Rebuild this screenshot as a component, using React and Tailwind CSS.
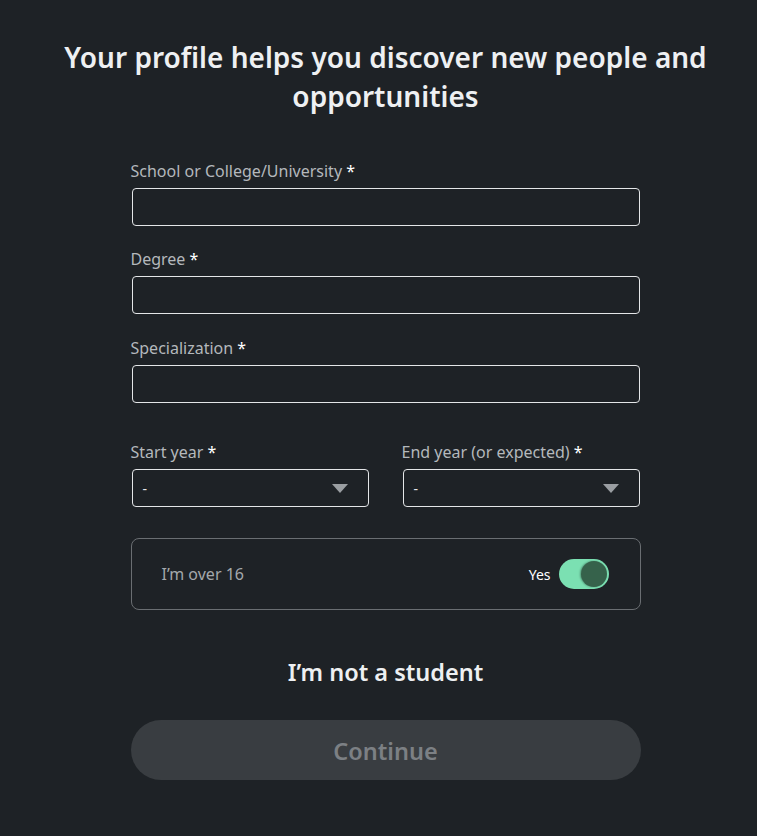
const Label = ({ children }) => (
  <label className="block text-[16px] leading-[24px] text-[#b4b8bc]">
    {children} <span className="text-white">*</span>
  </label>
);

const TextField = ({ label, className = "" }) => (
  <div className={className}>
    <Label>{label}</Label>
    <div className="mt-[5px] h-[38px] mx-[1px] rounded-[4px] border border-[#e4e6e8] bg-[#1e2226]" />
  </div>
);

const SelectField = ({ label }) => (
  <div className="flex-1">
    <Label>{label}</Label>
    <div className="mt-[5px] h-[38px] mx-[1px] rounded-[4px] border border-[#e4e6e8] bg-[#1e2226] flex items-center justify-between pl-[10px] pr-[20px]">
      <span className="text-[14px] text-[#e4e6e8]">-</span>
      <svg width="16" height="9" viewBox="0 0 16 9">
        <path d="M0 0 H16 L8 9 Z" fill="#9a9ea2" />
      </svg>
    </div>
  </div>
);

export default function App() {
  return (
    <div
      className="min-h-[836px] bg-[#1e2226] flex flex-col items-center pt-[38px] pl-[14px]"
      style={{ fontFamily: '"Noto Sans", "Open Sans", sans-serif' }}
    >
      <h1 className="text-[28px] leading-[39px] font-semibold text-[#eef0f2] text-center w-[660px]">
        Your profile helps you discover new people and opportunities
      </h1>

      <div className="w-[510px] mt-[43px]">
        <TextField label="School or College/University" />
        <TextField label="Degree" className="mt-[21px]" />
        <TextField label="Specialization" className="mt-[22px]" />

        <div className="flex gap-[32px] mt-[37px]">
          <SelectField label="Start year" />
          <SelectField label="End year (or expected)" />
        </div>

        <div className="mt-[31px] h-[72px] rounded-[8px] border border-[#6a6e72] flex items-center justify-between pl-[30px] pr-[31px]">
          <span className="text-[16px] text-[#a4a8ac]">I’m over 16</span>
          <div className="flex items-center gap-[8px]">
            <span className="text-[14px] text-white">Yes</span>
            <div className="w-[50px] h-[30px] rounded-full bg-[#7be0b2] flex items-center justify-end pr-[2px]">
              <div className="w-[26px] h-[26px] rounded-full bg-[#36624b] shadow-[-1px_0_2px_rgba(0,0,0,0.35)]" />
            </div>
          </div>
        </div>

        <div className="mt-[47px] text-center text-[23.5px] leading-[30px] font-semibold text-[#eef0f2]">
          I’m not a student
        </div>

        <button className="mt-[33px] w-full h-[60px] pt-[4px] rounded-full bg-[#393d41] text-[23.5px] font-semibold text-[#7c8084]">
          Continue
        </button>
      </div>
    </div>
  );
}
